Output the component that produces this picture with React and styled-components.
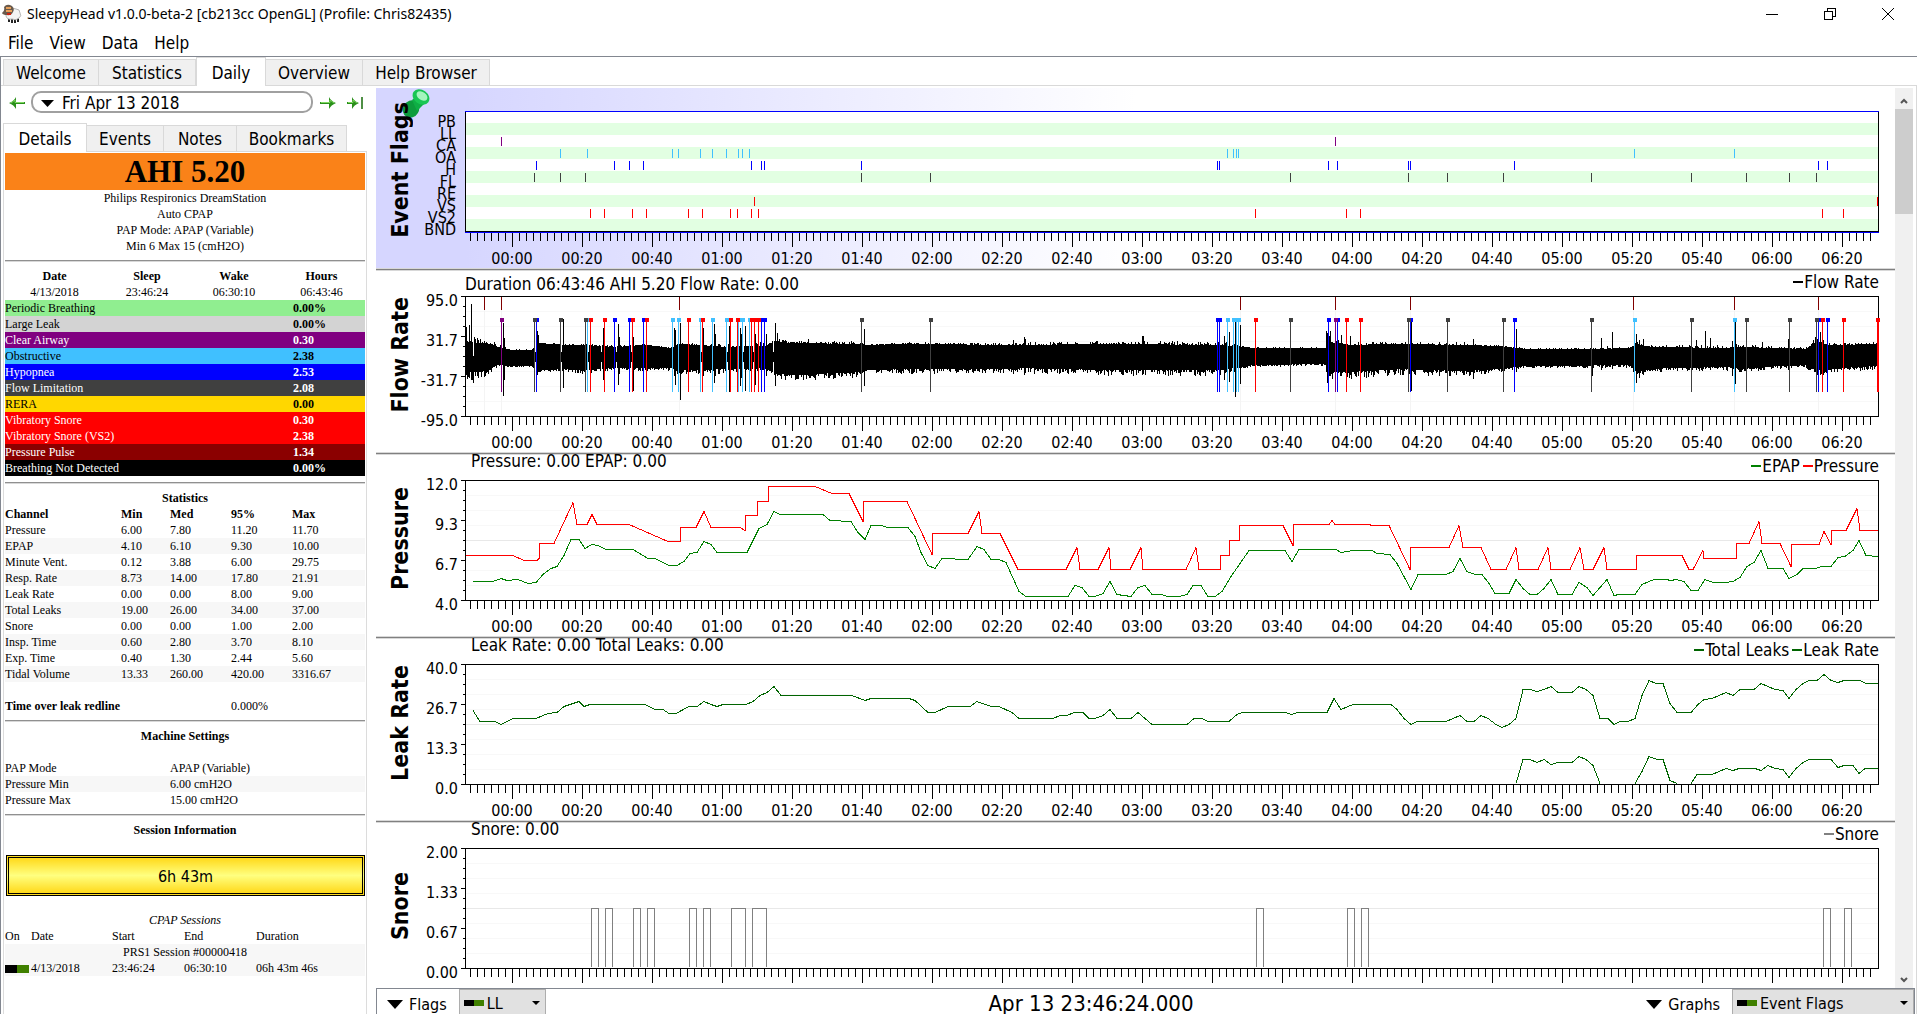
import React, { useState } from 'react';
import styled, { createGlobalStyle } from 'styled-components';

const GlobalStyle = createGlobalStyle`
    * {
        box-sizing: border-box;
    }
    body {
        margin: 0;
        background: #ffffff;
        color: #000000;
        font-family: 'DejaVu Sans Condensed', 'DejaVu Sans', sans-serif;
        font-size: 16px;
    }
    button, select {
        font: inherit;
        color: inherit;
    }
`;

const Window = styled.div`
    display: flex;
    flex-direction: column;
    height: 100vh;
    overflow: hidden;
`;
const TitleBar = styled.header`
    display: flex;
    align-items: center;
    height: 28px;
    padding-left: 2px;
    flex-shrink: 0;
`;
const WindowTitle = styled.h1`
    flex: 1;
    margin: 0 0 0 5px;
    font-family: 'Noto Sans', 'Open Sans', sans-serif;
    font-size: 14px;
    font-weight: normal;
    line-height: 28px;
`;
const WindowButton = styled.button`
    display: flex;
    align-items: center;
    justify-content: center;
    width: 58px;
    height: 28px;
    border: 0;
    padding: 0;
    background: transparent;
`;
const MenuBar = styled.nav`
    display: flex;
    gap: 16px;
    height: 28px;
    padding-left: 8px;
    flex-shrink: 0;
`;
const MenuItem = styled.button`
    border: 0;
    padding: 2px 0 0;
    background: transparent;
    font-size: 17px;
    line-height: 26px;
`;
const Main = styled.main`
    display: flex;
    flex-direction: column;
    flex: 1;
    min-height: 0;
    border-top: 1px solid #828790;
    border-left: 1px solid #828790;
`;
const Tabs = styled.div`
    display: flex;
    align-items: flex-end;
    height: ${props => props.$height}px;
    padding-left: ${props => props.$indent}px;
    border-bottom: 1px solid #d9d9d9;
    flex-shrink: 0;
`;
const Tab = styled.button`
    width: ${props => props.$width}px;
    height: ${props => (props.$active ? 29 : 26)}px;
    margin-bottom: ${props => (props.$active ? -1 : 0)}px;
    padding: 2px 0 0;
    border: 1px solid #d9d9d9;
    border-bottom: 0;
    border-left-width: ${props => (props.$first || props.$active ? 1 : 0)}px;
    background: ${props => (props.$active ? '#ffffff' : '#f0f0f0')};
    font-size: 17px;
    line-height: 23px;
    white-space: nowrap;
`;
const Content = styled.div`
    display: flex;
    flex: 1;
    min-height: 0;
`;

// left hand side
const Sidebar = styled.aside`
    display: flex;
    flex-direction: column;
    width: 375px;
    padding: 5px 9px 0 2px;
    flex-shrink: 0;
`;
const DateRow = styled.div`
    display: flex;
    align-items: center;
    height: 22px;
    padding: 0 2px 0 4px;
`;
const ArrowButton = styled.button`
    display: flex;
    align-items: center;
    justify-content: center;
    width: 20px;
    height: 22px;
    padding: 2px 0 0;
    border: 0;
    background: transparent;
`;
const DateButton = styled.button`
    display: flex;
    align-items: center;
    flex: 1;
    gap: 8px;
    height: 22px;
    margin: 0 5px 0 4px;
    padding: 3px 8px 0;
    border: 2px solid #a0a0a0;
    border-radius: 10px;
    background: #ffffff;
    font-size: 17px;
    line-height: 15px;
    overflow: hidden;
`;
const LastDay = styled.div`
    margin-left: 7px;
`;
const Details = styled.div`
    flex: 1;
    padding: 1px 1px 0;
    border: 1px solid #dcdcdc;
    border-top: 0;
    border-bottom: 0;
    font-family: 'Liberation Serif', serif;
    font-size: 12px;
    line-height: 16px;
    text-align: center;
`;
const Ahi = styled.h2`
    margin: 0;
    background: #fa8218;
    font-size: 31px;
    line-height: 37px;
`;
const Line = styled.div`
    height: 16px;
    font-style: ${props => (props.$italic ? 'italic' : 'normal')};
    font-weight: ${props => (props.$bold ? 'bold' : 'normal')};
`;
const Rule = styled.hr`
    height: 2px;
    margin: 6px 0;
    border: 0;
    border-top: 1px solid #909090;
    background: #d8d8d8;
`;
const Table = styled.table`
    width: 100%;
    border-collapse: collapse;
    table-layout: fixed;
    text-align: ${props => (props.$centered ? 'center' : 'left')};
    white-space: nowrap;
    th, td {
        height: 16px;
        padding: 0;
        text-align: inherit;
    }
`;
const EventRow = styled.tr`
    background: ${props => props.$color};
    color: ${props => (props.$light ? '#ffffff' : '#000000')};
    th {
        font-weight: normal;
    }
    td {
        font-weight: bold;
    }
`;
const Row = styled.tr`
    background: ${props => (props.$shaded ? '#f7f7f7' : 'transparent')};
    th {
        font-weight: ${props => (props.$bold ? 'bold' : 'normal')};
    }
`;
const SessionButton = styled.button`
    display: block;
    width: calc(100% - 1px);
    height: 41px;
    margin: 17px 0 16px 1px;
    padding: 2px 0 0;
    border: 3px double #000000;
    background: linear-gradient(#ffd91a, #ffff80, #ffd91a);
    font-family: 'DejaVu Sans Condensed', 'DejaVu Sans', sans-serif;
    font-size: 16px;
`;
const Middle = styled.td`
    text-align: center !important;
`;

// graphs
const GraphPane = styled.section`
    display: flex;
    flex-direction: column;
    flex: 1;
    min-width: 0;
    border-right: 1px solid #d9d9d9;
`;
const GraphView = styled.div`
    display: flex;
    flex: 1;
    min-height: 0;
    padding: 2px 3px 0 0;
    overflow: hidden;
`;
const GraphList = styled.div`
    flex: 1;
    min-width: 0;
`;
const Graph = styled.section`
    position: relative;
    display: grid;
    grid-template-columns: 44px 38px 7px 1fr 16px;
    grid-template-rows: ${props => (props.$first ? '23px 122px 14px 21px' : '25px 121px 14px 21px')};
    background: ${props => (props.$first ? 'linear-gradient(to right, #d6d6ff 90px, #ffffff 760px)' : '#ffffff')};
    border-top: ${props => (props.$first ? 0 : 3)}px solid #d8d8d8;
`;
const Divider = styled.div`
    position: absolute;
    top: -2px;
    left: 0;
    right: 0;
    height: 1px;
    background: #808080;
`;
const GraphTitle = styled.h2`
    grid-row: 2;
    grid-column: 1;
    display: flex;
    align-items: center;
    justify-content: center;
    height: 121px;
    margin: 0;
    padding: 0 0 4px 4px;
    z-index: 1;
    span {
        writing-mode: vertical-rl;
        transform: rotate(180deg);
        font-size: 23px;
        line-height: 24px;
        white-space: nowrap;
    }
`;
const Pin = styled.svg`
    position: absolute;
    left: 26px;
    top: 0;
`;
const Header = styled.div`
    grid-row: 1;
    grid-column: 4;
    display: flex;
    justify-content: space-between;
    padding-left: ${props => (props.$wide ? 0 : 6)}px;
    font-size: 17px;
    white-space: nowrap;
`;
const Caption = styled.span`
    line-height: ${props => (props.$wide ? 26 : 12)}px;
`;
const Legend = styled.span`
    display: flex;
    align-items: center;
    gap: 3px;
    height: 22px;
    line-height: 22px;
`;
const LegendItem = styled.span`
    display: flex;
    align-items: center;
    gap: 1px;
    &::before {
        content: '';
        width: 10px;
        height: 2px;
        background: ${props => props.$color};
    }
`;
const Scale = styled.div`
    grid-row: 2;
    grid-column: 2;
    display: flex;
    flex-direction: column;
    align-items: flex-end;
    height: 0;
    margin-top: ${props => (props.$step === 12 ? 5 : -5)}px;
    span {
        flex-shrink: 0;
        height: ${props => props.$step}px;
        line-height: ${props => (props.$step === 12 ? 12 : 20)}px;
        padding-right: ${props => (props.$step === 12 ? 2 : 0)}px;
    }
`;
const ScaleTicks = styled.svg`
    grid-row: 2;
    grid-column: 3;
    width: 7px;
    height: 121px;
`;
const Plot = styled.svg`
    grid-row: 2;
    grid-column: 4;
    width: 100%;
    height: 122px;
    overflow: visible;
`;
const TimeTicks = styled.svg`
    grid-row: 3;
    grid-column: 4;
    width: 100%;
    height: 14px;
`;
const TimeAxis = styled.div`
    grid-row: 4;
    grid-column: 4;
    display: grid;
    grid-template-columns: repeat(20, 1fr);
    padding: 0 2px 0 12px;
    line-height: 24px;
    text-align: center;
`;
const ScrollBar = styled.div`
    display: flex;
    flex-direction: column;
    width: 18px;
    background: #f0f0f0;
    button {
        height: 21px;
        padding: 0;
        border: 0;
        background: transparent;
    }
`;
const Track = styled.div`
    flex: 1;
`;
const Thumb = styled.div`
    height: 105px;
    background: #cdcdcd;
`;
const BottomBar = styled.footer`
    display: flex;
    align-items: stretch;
    height: 26px;
    margin-right: 1px;
    border: 1px solid #828790;
    border-bottom: 0;
    overflow: hidden;
    flex-shrink: 0;
`;
const ToggleButton = styled.button`
    display: flex;
    align-items: center;
    gap: 6px;
    padding: 6px 12px 0 10px;
    border: 0;
    background: transparent;
`;
const Clock = styled.div`
    flex: 1;
    font-size: 22px;
    line-height: 30px;
    text-align: center;
`;
const Combo = styled.label`
    display: flex;
    align-items: center;
    width: ${props => props.$width}px;
    padding: 2px 5px 0 4px;
    border: 1px solid #adadad;
    border-bottom: 0;
    background: #e1e1e1;
`;
const Select = styled.select`
    flex: 1;
    min-width: 0;
    padding: 0 0 0 3px;
    border: 0;
    appearance: none;
    background: transparent;
`;
const Switch = styled.span`
    display: inline-block;
    width: ${props => props.$width}px;
    height: ${props => (props.$width === 24 ? 8 : 6)}px;
    background: linear-gradient(to right, #000000 50%, #408000 50%);
    vertical-align: middle;
`;

const tabs = [['Welcome', 96], ['Statistics', 97], ['Daily', 70], ['Overview', 97], ['Help Browser', 127]];
const detailTabs = [['Details', 84], ['Events', 77], ['Notes', 73], ['Bookmarks', 110]];

const events = [
    ['Periodic Breathing', '0.00%', '#90ee90'],
    ['Large Leak', '0.00%', '#d3d3d3'],
    ['Clear Airway', '0.30', '#800080', true],
    ['Obstructive', '2.38', '#40c0ff'],
    ['Hypopnea', '2.53', '#0000ff', true],
    ['Flow Limitation', '2.08', '#404040', true],
    ['RERA', '0.00', '#ffd700'],
    ['Vibratory Snore', '0.30', '#ff0000', true],
    ['Vibratory Snore (VS2)', '2.38', '#ff0000', true],
    ['Pressure Pulse', '1.34', '#8b0000', true],
    ['Breathing Not Detected', '0.00%', '#000000', true],
];

const stats = [
    ['Pressure', '6.00', '7.80', '11.20', '11.70'],
    ['EPAP', '4.10', '6.10', '9.30', '10.00'],
    ['Minute Vent.', '0.12', '3.88', '6.00', '29.75'],
    ['Resp. Rate', '8.73', '14.00', '17.80', '21.91'],
    ['Leak Rate', '0.00', '0.00', '8.00', '9.00'],
    ['Total Leaks', '19.00', '26.00', '34.00', '37.00'],
    ['Snore', '0.00', '0.00', '1.00', '2.00'],
    ['Insp. Time', '0.60', '2.80', '3.70', '8.10'],
    ['Exp. Time', '0.40', '1.30', '2.44', '5.60'],
    ['Tidal Volume', '13.33', '260.00', '420.00', '3316.67'],
];

const settings = [
    ['PAP Mode', 'APAP (Variable)'],
    ['Pressure Min', '6.00 cmH2O'],
    ['Pressure Max', '15.00 cmH2O'],
];

const flagNames = ['PB', 'LL', 'CA', 'OA', 'H', 'FL', 'RE', 'VS', 'VS2', 'BND'];

// positions along the night, 3.5 units to a minute
const flags = [
    { row: 4, color: '#0000ff', at: [71, 149, 164, 178, 286, 296, 299, 396, 752, 754, 863, 872, 943, 945, 1049, 1353, 1362] },
    { row: 3, color: '#40c0ff', at: [95, 122, 207, 213, 235, 247, 261, 273, 277, 284, 762, 768, 771, 773, 1169, 1269] },
    { row: 5, color: '#404040', at: [69, 95, 120, 396, 465, 825, 943, 982, 1038, 1126, 1226, 1281, 1324, 1351] },
    { row: 7, color: '#ff0000', at: [289, 1412] },
    { row: 8, color: '#ff0000', at: [125, 139, 167, 181, 223, 237, 265, 272, 286, 293, 790, 881, 895, 1357, 1378] },
    { row: 2, color: '#800080', at: [36, 870] },
];
const pulses = [19, 36, 214, 775, 870, 945, 1168, 1269, 1353];

const pressure =
    '1,75 48,75 59,80 72,80 74,78 74,63 89,63 108,22 112,44 122,44 127,34 132,44 164,44 203,61 215,61 215,47 231,47 239,31 246,47 275,47 280,50 280,35 292,35 292,21 303,21 303,6 350,6 367,13 384,13 398,41 398,21 442,21 467,74 467,53 503,53 514,31 517,53 535,53 553,89 601,89 612,67 615,89 633,89 644,67 646,89 665,89 676,67 678,89 721,89 731,67 734,89 755,89 755,75 764,75 764,60 774,60 774,45 818,45 828,65 828,44 864,44 867,40 870,44 905,44 905,45 924,45 945,89 945,67 984,67 994,45 998,67 1016,67 1026,89 1041,89 1051,67 1054,89 1073,89 1083,67 1086,89 1105,89 1115,67 1119,89 1128,89 1139,67 1142,89 1171,89 1171,75 1217,75 1224,89 1228,89 1238,70 1239,78 1271,78 1271,63 1284,63 1294,41 1297,63 1315,63 1326,86 1326,64 1354,64 1359,51 1366,64 1366,50 1381,50 1392,28 1395,50 1413,50';
const epap =
    '8,101 28,101 36,98 42,100 53,99 63,103 71,102 78,94 86,88 92,86 99,75 106,59 114,59 120,68 127,64 133,65 141,69 168,69 183,78 190,78 204,85 212,85 219,81 225,73 232,72 239,61 246,64 252,72 282,72 294,48 302,44 309,31 315,34 358,34 365,40 386,41 393,52 400,59 406,45 417,45 422,47 443,47 450,56 456,72 463,85 470,88 477,78 503,79 512,66 519,69 526,79 534,79 541,82 554,111 561,116 603,116 610,105 617,107 624,116 630,116 638,113 645,101 652,114 666,116 673,107 680,105 687,114 697,114 702,116 714,116 722,114 728,105 736,105 743,116 750,116 757,111 766,96 784,70 820,70 827,81 834,69 871,69 876,72 888,70 907,70 912,73 925,74 932,83 946,109 953,94 981,94 988,91 995,78 1002,91 1010,94 1017,94 1024,103 1030,113 1044,113 1051,99 1058,108 1065,114 1072,114 1079,108 1086,99 1093,114 1107,114 1114,102 1122,107 1128,115 1135,107 1142,99 1149,115 1154,114 1170,114 1177,104 1189,99 1201,99 1206,100 1211,99 1219,101 1226,110 1233,110 1240,99 1248,102 1260,102 1268,101 1275,97 1282,86 1289,82 1296,70 1303,88 1318,88 1324,98 1332,94 1338,88 1350,88 1357,86 1366,86 1373,77 1380,76 1388,70 1394,60 1401,75 1413,76';
const totalLeaks =
    '8,46 15,57 30,57 36,60 48,54 71,54 83,49 92,48 99,42 114,37 119,42 125,40 180,40 190,45 198,45 204,49 211,49 224,42 232,42 239,37 246,40 252,42 258,40 281,40 288,37 295,31 302,28 309,22 316,31 387,31 400,36 406,34 444,34 450,36 463,48 470,48 483,42 505,42 512,37 526,42 534,42 547,48 554,54 588,54 595,51 602,51 609,48 618,48 624,54 630,54 638,51 645,45 652,54 666,54 673,48 687,60 722,60 729,54 737,54 743,57 764,57 772,50 777,48 820,48 827,50 832,48 862,48 869,34 876,45 888,40 926,40 932,45 939,54 946,60 952,57 981,57 995,51 1002,57 1009,57 1016,51 1023,54 1031,60 1037,63 1044,60 1051,54 1058,25 1065,25 1072,27 1079,25 1086,22 1093,28 1107,28 1114,22 1121,25 1128,31 1135,54 1143,54 1149,60 1155,57 1163,57 1170,54 1177,31 1184,16 1191,19 1198,19 1205,39 1212,48 1226,48 1233,40 1239,35 1247,34 1261,28 1268,31 1275,25 1289,25 1296,19 1310,25 1318,26 1324,34 1331,25 1338,19 1344,16 1352,16 1359,10 1366,16 1373,18 1379,16 1395,16 1401,19 1413,19';
const leakRate = [
    '1051,119 1058,95 1065,95 1072,98 1079,95 1086,100 1093,98 1107,98 1114,92 1121,95 1128,101 1135,119',
    '1170,119 1177,107 1184,92 1192,95 1198,95 1205,116 1212,119',
    '1226,119 1232,110 1247,110 1261,104 1268,106 1274,104 1290,104 1296,106 1303,101 1310,104 1318,105 1324,113 1331,104 1338,98 1344,95 1366,95 1373,103 1379,101 1388,101 1394,109 1400,104 1413,104',
];
const snores = [[126, 133], [140, 147], [168, 175], [182, 189], [224, 231], [238, 245], [266, 280], [287, 301], [791, 798], [882, 889], [896, 903], [1358, 1365], [1379, 1386]];

// breathing envelope: x, top, bottom, roughness above, roughness below
const envelope = [
    [0, 46, 76, 8, 9], [12, 47, 76, 6, 8], [26, 48, 73, 4, 6], [32, 51, 68, 4, 3], [44, 54, 70, 1, 2], [66, 54, 70, 1, 1],
    [73, 47, 74, 2, 5], [96, 49, 73, 2, 5], [120, 49, 74, 1, 4], [150, 51, 72, 2, 3], [180, 49, 72, 1, 3], [205, 52, 72, 1, 3],
    [215, 48, 74, 2, 5], [260, 51, 73, 3, 5], [300, 50, 72, 5, 4], [310, 45, 77, 3, 7], [325, 47, 79, 2, 7], [395, 48, 76, 3, 6],
    [400, 49, 74, 1, 3], [445, 48, 73, 2, 5], [548, 49, 73, 2, 4], [556, 49, 72, 3, 6], [645, 48, 74, 3, 6], [752, 49, 74, 4, 6],
    [780, 51, 71, 4, 3], [786, 52, 69, 1, 2], [861, 52, 68, 1, 2], [863, 46, 76, 6, 8], [885, 49, 76, 4, 8], [935, 48, 73, 2, 6],
    [1000, 49, 75, 3, 6], [1030, 50, 73, 2, 4], [1060, 53, 70, 1, 2], [1122, 53, 70, 1, 2], [1130, 53, 69, 3, 5], [1164, 52, 69, 1, 3],
    [1172, 48, 76, 4, 7], [1184, 51, 72, 2, 4], [1260, 52, 71, 3, 4], [1275, 51, 72, 3, 5], [1340, 53, 69, 2, 3], [1351, 46, 74, 6, 8],
    [1362, 49, 74, 3, 6], [1375, 49, 72, 2, 4], [1413, 48, 70, 2, 5],
];
const spikes = [
    [1, 31, 79], [4, 29, 82], [6, 8, 84], [8, 60, 87], [12, 42, 80], [38, 27, 100], [39, 42, 84], [72, 35, 79], [73, 39, 76], [98, 23, 92],
    [125, 36, 80], [138, 32, 84], [153, 28, 89], [154, 41, 78], [168, 41, 95], [209, 32, 80], [210, 34, 89], [215, 27, 104], [238, 32, 80],
    [249, 28, 87], [250, 38, 80], [264, 30, 96], [275, 32, 90], [276, 38, 82], [280, 30, 95], [290, 38, 89], [301, 38, 80], [310, 27, 90], [312, 37, 80],
    [343, 43, 80], [399, 33, 90], [548, 44, 78], [559, 41, 79], [560, 43, 77], [677, 40, 79], [678, 40, 78], [759, 40, 84], [764, 36, 86],
    [770, 24, 101], [775, 29, 88], [861, 35, 76], [862, 37, 87], [865, 35, 80], [872, 39, 78], [876, 39, 80], [881, 39, 84], [885, 40, 79],
    [946, 24, 95], [1008, 43, 83], [1051, 33, 76], [1127, 53, 80], [1136, 42, 74], [1147, 36, 73], [1171, 38, 87], [1174, 44, 82], [1178, 43, 79],
    [1231, 44, 74], [1240, 35, 73], [1245, 42, 74], [1267, 45, 80], [1270, 24, 88], [1297, 46, 72], [1323, 43, 74], [1352, 43, 79], [1355, 36, 79], [1358, 44, 79],
];

const noise = n => {
    const v = Math.sin(n * 12.9898) * 43758.5453;
    return v - Math.floor(v);
};

const buildFlow = () => {
    const peaks = new Map(spikes.map(s => [s[0], s]));
    let path = '';
    let k = 0;
    for (let x = 0; x < 1413; x++) {
        while (envelope[k + 1][0] < x) k++;
        const a = envelope[k];
        const b = envelope[k + 1];
        const t = (x - a[0]) / (b[0] - a[0]);
        const mix = i => a[i] + (b[i] - a[i]) * t;
        let top = mix(1) - noise(x + 1) ** 3 * mix(3);
        let bottom = mix(2) + noise(x + 2000) ** 2 * mix(4);
        // breathing fades for a moment before it recovers
        if (x > 60 && x < 310 && peaks.has(x + 2) && !peaks.has(x + 1)) {
            top = 56;
            bottom = 66;
        }
        if (peaks.has(x)) [, top, bottom] = peaks.get(x);
        path += `M${x}.5 ${Math.round(top)}V${Math.round(bottom)}`;
    }
    return path;
};
const flowPath = buildFlow();

const times = Array.from({ length: 20 }, (_, i) => {
    const min = i * 20;
    return String(Math.floor(min / 60)).padStart(2, '0') + ':' + String(min % 60).padStart(2, '0');
});
const tickPath = Array.from({ length: 201 }, (_, i) => `M${5 + i * 7}.5 0V${i % 10 === 6 ? 14 : 8}`).join('');
const scalePath = Array.from({ length: 13 }, (_, i) => `M${i % 4 ? 5 : 3} ${i * 10}.5H7`).join('');

const Triangle = ({ width, height }) => (
    <svg width={width} height={height} viewBox="0 0 14 7" preserveAspectRatio="none" aria-hidden="true">
        <path d="M0 0H14L7 7Z" />
    </svg>
);

const Arrow = ({ back, last }) => (
    <svg width={last ? 18 : 16} height="14" viewBox={last ? '0 0 18 14' : '0 0 16 14'} aria-hidden="true">
        <g transform={back ? 'matrix(-1 0 0 1 16 0)' : undefined}>
            <path d={last ? 'M1 6H6V1Q8 5 13 7Q8 9 6 13V8H1Z' : 'M0 6H9V1Q11 5 16 7Q11 9 9 13V8H0Z'} fill="#2a8f1a" />
            <path d={last ? 'M2 6.5H7V4L11 7' : 'M1 6.5H10V4L14 7'} fill="none" stroke="#7fd860" />
            {last && <path d="M16 1V13" stroke="#4f8f45" strokeWidth="2" />}
        </g>
    </svg>
);

const Sheep = () => (
    <svg width="20" height="20" viewBox="0 0 20 20" aria-hidden="true">
        <path d="M7 14V18M10 15V19M13 15V19M16 14V18" stroke="#222222" strokeWidth="2" />
        <path d="M8 6Q11 3 14 5Q18 5 18 9Q20 12 17 14Q14 17 10 15Q5 16 4 12Q3 8 8 6Z" fill="#f4f4f4" stroke="#b5b5b5" />
        <path d="M2 3Q5 -1 10 2Q13 5 11 8Q9 12 5 11Q1 11 0 9Q3 7 2 3Z" fill="#6a5a4c" />
        <path d="M4 4H9M4 7H10" stroke="#e8a05a" strokeWidth="2" />
        <path d="M5 10L9 10" stroke="#cc2211" strokeWidth="2" />
    </svg>
);

const Frame = ({ first }) => (
    <g fill="none" stroke="#000000" shapeRendering="crispEdges">
        <path d="M0.5 0V121M1413.5 0V121M0 120.5H1414" />
        <path d="M0 0.5H1414" stroke={first ? '#0000ff' : '#000000'} />
        {first && <path d="M0 121.5H1414" stroke="#0000ff" />}
    </g>
);

const Grid = ({ middle }) => (
    <g stroke="#f8f8f8" shapeRendering="crispEdges">
        <path d="M1 15.5H1413M1 30.5H1413M1 45.5H1413M1 75.5H1413M1 90.5H1413M1 105.5H1413" />
        {middle && <path d="M1 60.5H1413" stroke="#e8e8e8" />}
    </g>
);

const GraphPanel = ({ title, caption, wide, legend, scale, first, last, children }) => (
    <Graph $first={first}>
        {!first && <Divider />}
        {first && (
            <Pin width="30" height="32" viewBox="0 0 30 32" aria-hidden="true">
                <ellipse cx="9" cy="21" rx="8" ry="9" fill="#0c9c3c" transform="rotate(30 9 21)" />
                <path d="M10 12L18 5L24 14L15 23Z" fill="#0fae45" />
                <ellipse cx="19" cy="9" rx="9" ry="7" fill="#19c653" transform="rotate(35 19 9)" />
                <ellipse cx="20" cy="8" rx="6" ry="4" fill="#a5f5be" transform="rotate(35 20 8)" />
            </Pin>
        )}
        <GraphTitle>
            <span>{title}</span>
        </GraphTitle>
        <Header $wide={wide}>
            <Caption $wide={wide}>{caption}</Caption>
            <Legend>
                {legend.map(([name, color]) => (
                    <LegendItem key={name} $color={color}>
                        {name}
                    </LegendItem>
                ))}
            </Legend>
        </Header>
        <Scale $step={first ? 12 : 40}>
            {scale.map(label => (
                <span key={label}>{label}</span>
            ))}
        </Scale>
        {!first && (
            <ScaleTicks viewBox="0 0 7 121" shapeRendering="crispEdges">
                <path d={scalePath} stroke="#000000" />
            </ScaleTicks>
        )}
        <Plot viewBox="0 0 1414 122" preserveAspectRatio="none">
            {children}
        </Plot>
        <TimeTicks viewBox="0 0 1414 14" preserveAspectRatio="none" shapeRendering="crispEdges">
            <path d={tickPath} stroke="#000000" />
        </TimeTicks>
        {!last && (
            <TimeAxis>
                {times.map(time => (
                    <span key={time}>{time}</span>
                ))}
            </TimeAxis>
        )}
    </Graph>
);

const DetailsPanel = () => (
    <Details>
        <Ahi>AHI 5.20</Ahi>
        <Line>Philips Respironics DreamStation</Line>
        <Line>Auto CPAP</Line>
        <Line>PAP Mode: APAP (Variable)</Line>
        <Line>Min 6 Max 15 (cmH2O)</Line>
        <Rule />
        <Table $centered>
            <colgroup>
                <col width="99" />
                <col width="86" />
                <col width="88" />
                <col width="87" />
            </colgroup>
            <tbody>
                <tr>
                    <th>Date</th>
                    <th>Sleep</th>
                    <th>Wake</th>
                    <th>Hours</th>
                </tr>
                <tr>
                    <td>4/13/2018</td>
                    <td>23:46:24</td>
                    <td>06:30:10</td>
                    <td>06:43:46</td>
                </tr>
            </tbody>
        </Table>
        <Table>
            <colgroup>
                <col width="80%" />
                <col width="20%" />
            </colgroup>
            <tbody>
                {events.map(([name, value, color, light]) => (
                    <EventRow key={name} $color={color} $light={light}>
                        <th>{name}</th>
                        <td>{value}</td>
                    </EventRow>
                ))}
            </tbody>
        </Table>
        <Rule />
        <Line $bold>Statistics</Line>
        <Table>
            <colgroup>
                <col width="116" />
                <col width="49" />
                <col width="61" />
                <col width="61" />
                <col width="73" />
            </colgroup>
            <tbody>
                <Row $bold>
                    <th>Channel</th>
                    <th>Min</th>
                    <th>Med</th>
                    <th>95%</th>
                    <th>Max</th>
                </Row>
                {stats.map(([name, ...values], index) => (
                    <Row key={name} $shaded={index % 2 === 1}>
                        <th>{name}</th>
                        {values.map((value, i) => (
                            <td key={i}>{value}</td>
                        ))}
                    </Row>
                ))}
                <Row>
                    <td colSpan={5}></td>
                </Row>
                <Row $bold>
                    <th colSpan={3}>Time over leak redline</th>
                    <td colSpan={2}>0.000%</td>
                </Row>
            </tbody>
        </Table>
        <Rule />
        <Line $bold>Machine Settings</Line>
        <Line />
        <Table>
            <colgroup>
                <col width="165" />
                <col width="195" />
            </colgroup>
            <tbody>
                {settings.map(([name, value], index) => (
                    <Row key={name} $shaded={index === 1}>
                        <th>{name}</th>
                        <td>{value}</td>
                    </Row>
                ))}
            </tbody>
        </Table>
        <Rule />
        <Line $bold>Session Information</Line>
        <SessionButton>6h 43m</SessionButton>
        <Line $italic>CPAP Sessions</Line>
        <Table>
            <colgroup>
                <col width="26" />
                <col width="81" />
                <col width="72" />
                <col width="72" />
                <col width="109" />
            </colgroup>
            <tbody>
                <Row>
                    <th>On</th>
                    <th>Date</th>
                    <th>Start</th>
                    <th>End</th>
                    <th>Duration</th>
                </Row>
                <Row $shaded>
                    <Middle colSpan={5}>PRS1 Session #00000418</Middle>
                </Row>
                <Row $shaded>
                    <td>
                        <Switch $width={24} />
                    </td>
                    <td>4/13/2018</td>
                    <td>23:46:24</td>
                    <td>06:30:10</td>
                    <td>06h 43m 46s</td>
                </Row>
            </tbody>
        </Table>
    </Details>
);

const App = () => {
    const [tab, setTab] = useState('Daily');
    const [detailTab, setDetailTab] = useState('Details');

    return (
        <Window>
            <GlobalStyle />
            <TitleBar>
                <Sheep />
                <WindowTitle>SleepyHead v1.0.0-beta-2 [cb213cc OpenGL] (Profile: Chris82435)</WindowTitle>
                <WindowButton aria-label="Minimize">
                    <svg width="12" height="12" shapeRendering="crispEdges">
                        <path d="M0 6.5H12" stroke="#000000" />
                    </svg>
                </WindowButton>
                <WindowButton aria-label="Restore">
                    <svg width="12" height="12" fill="none" stroke="#000000" shapeRendering="crispEdges">
                        <path d="M0.5 3.5H8.5V11.5H0.5ZM3.5 3V0.5H11.5V8.5H9" />
                    </svg>
                </WindowButton>
                <WindowButton aria-label="Close">
                    <svg width="12" height="12" stroke="#000000">
                        <path d="M0 0L12 12M12 0L0 12" />
                    </svg>
                </WindowButton>
            </TitleBar>
            <MenuBar>
                {['File', 'View', 'Data', 'Help'].map(item => (
                    <MenuItem key={item}>{item}</MenuItem>
                ))}
            </MenuBar>
            <Main>
                <Tabs $height={29} $indent={2}>
                    {tabs.map(([name, width], index) => (
                        <Tab key={name} $width={width} $first={index === 0} $active={name === tab} onClick={() => setTab(name)}>
                            {name}
                        </Tab>
                    ))}
                </Tabs>
                <Content>
                    <Sidebar>
                        <DateRow>
                            <ArrowButton aria-label="Previous day">
                                <Arrow back />
                            </ArrowButton>
                            <DateButton>
                                <Triangle width={13} height={7} />
                                Fri Apr 13 2018
                            </DateButton>
                            <ArrowButton aria-label="Next day">
                                <Arrow />
                            </ArrowButton>
                            <LastDay>
                                <ArrowButton aria-label="Last day">
                                    <Arrow last />
                                </ArrowButton>
                            </LastDay>
                        </DateRow>
                        <Tabs $height={39} $indent={0}>
                            {detailTabs.map(([name, width], index) => (
                                <Tab
                                    key={name}
                                    $width={width}
                                    $first={index === 0}
                                    $active={name === detailTab}
                                    onClick={() => setDetailTab(name)}
                                >
                                    {name}
                                </Tab>
                            ))}
                        </Tabs>
                        <DetailsPanel />
                    </Sidebar>
                    <GraphPane>
                        <GraphView>
                            <GraphList>
                                <GraphPanel first title="Event Flags" caption="" legend={[]} scale={flagNames}>
                                    <rect width="1414" height="121" fill="#ffffff" />
                                    <g shapeRendering="crispEdges">
                                        {[12, 36, 60, 84, 108].map(y => (
                                            <rect key={y} y={y} width="1414" height="12" fill="#e2ffe2" />
                                        ))}
                                        {flags.map(({ row, color, at }) =>
                                            at.map(x => <rect key={row + '-' + x} x={x} y={row * 12 + 2} width="1" height="9" fill={color} />)
                                        )}
                                    </g>
                                    <Frame first />
                                </GraphPanel>
                                <GraphPanel
                                    title="Flow Rate"
                                    caption="Duration 06:43:46 AHI 5.20 Flow Rate: 0.00"
                                    wide
                                    legend={[['Flow Rate', '#000000']]}
                                    scale={['95.0', '31.7', '-31.7', '-95.0']}
                                >
                                    <Grid />
                                    <g shapeRendering="crispEdges">
                                        {pulses.map(x => (
                                            <rect key={x} x={x} y="1" width="1" height="119" fill="#f4f4f4" />
                                        ))}
                                        <path d={flowPath} stroke="#000000" />
                                        {pulses.map(x => (
                                            <rect key={x} x={x} y="1" width="1" height="13" fill="#800000" />
                                        ))}
                                        {flags.map(({ row, color, at }) =>
                                            at.map(x => (
                                                <path key={row + '-' + x} d={`M${x} 24h1v72h-1zM${x - 1} 22h4v4h-4z`} fill={color} />
                                            ))
                                        )}
                                    </g>
                                    <Frame />
                                    <rect x="1412" y="22" width="2" height="74" fill="#ff0000" />
                                </GraphPanel>
                                <GraphPanel
                                    title="Pressure"
                                    caption="Pressure: 0.00 EPAP: 0.00"
                                    legend={[['EPAP', '#008000'], ['Pressure', '#ff0000']]}
                                    scale={['12.0', '9.3', '6.7', '4.0']}
                                >
                                    <Grid middle />
                                    <g fill="none" transform="translate(0 0.5)" shapeRendering="crispEdges">
                                        <polyline points={pressure} stroke="#ff0000" />
                                        <polyline points={epap} stroke="#008000" />
                                    </g>
                                    <Frame />
                                </GraphPanel>
                                <GraphPanel
                                    title="Leak Rate"
                                    caption="Leak Rate: 0.00 Total Leaks: 0.00"
                                    legend={[['Total Leaks', '#006400'], ['Leak Rate', '#006400']]}
                                    scale={['40.0', '26.7', '13.3', '0.0']}
                                >
                                    <Grid middle />
                                    <g fill="none" stroke="#006400" transform="translate(0 0.5)" shapeRendering="crispEdges">
                                        <polyline points={totalLeaks} />
                                        {leakRate.map(points => (
                                            <polyline key={points} points={points} />
                                        ))}
                                    </g>
                                    <Frame />
                                </GraphPanel>
                                <GraphPanel
                                    last
                                    title="Snore"
                                    caption="Snore: 0.00"
                                    legend={[['Snore', '#808080']]}
                                    scale={['2.00', '1.33', '0.67', '0.00']}
                                >
                                    <Grid middle />
                                    <g fill="none" stroke="#808080" shapeRendering="crispEdges">
                                        {snores.map(([from, to]) => (
                                            <path key={from} d={`M${from}.5 119V60.5H${to}.5V119`} />
                                        ))}
                                    </g>
                                    <Frame />
                                </GraphPanel>
                            </GraphList>
                            <ScrollBar>
                                <button aria-label="Scroll up">
                                    <svg width="8" height="6" fill="none" stroke="#555555" strokeWidth="2">
                                        <path d="M1 5L4 2L7 5" />
                                    </svg>
                                </button>
                                <Track>
                                    <Thumb />
                                </Track>
                                <button aria-label="Scroll down">
                                    <svg width="8" height="6" fill="none" stroke="#555555" strokeWidth="2">
                                        <path d="M1 1L4 4L7 1" />
                                    </svg>
                                </button>
                            </ScrollBar>
                        </GraphView>
                        <BottomBar>
                            <ToggleButton>
                                <Triangle width={16} height={9} />
                                Flags
                            </ToggleButton>
                            <Combo $width={87}>
                                <Switch $width={20} />
                                <Select aria-label="Flags shown" defaultValue="LL">
                                    {flagNames.map(name => (
                                        <option key={name}>{name}</option>
                                    ))}
                                </Select>
                                <Triangle width={8} height={4} />
                            </Combo>
                            <Clock>Apr 13 23:46:24.000</Clock>
                            <ToggleButton>
                                <Triangle width={16} height={9} />
                                Graphs
                            </ToggleButton>
                            <Combo $width={182}>
                                <Switch $width={20} />
                                <Select aria-label="Graphs shown" defaultValue="Event Flags">
                                    {['Event Flags', 'Flow Rate', 'Pressure', 'Leak Rate', 'Snore'].map(name => (
                                        <option key={name}>{name}</option>
                                    ))}
                                </Select>
                                <Triangle width={8} height={4} />
                            </Combo>
                        </BottomBar>
                    </GraphPane>
                </Content>
            </Main>
        </Window>
    );
};

export default App;
